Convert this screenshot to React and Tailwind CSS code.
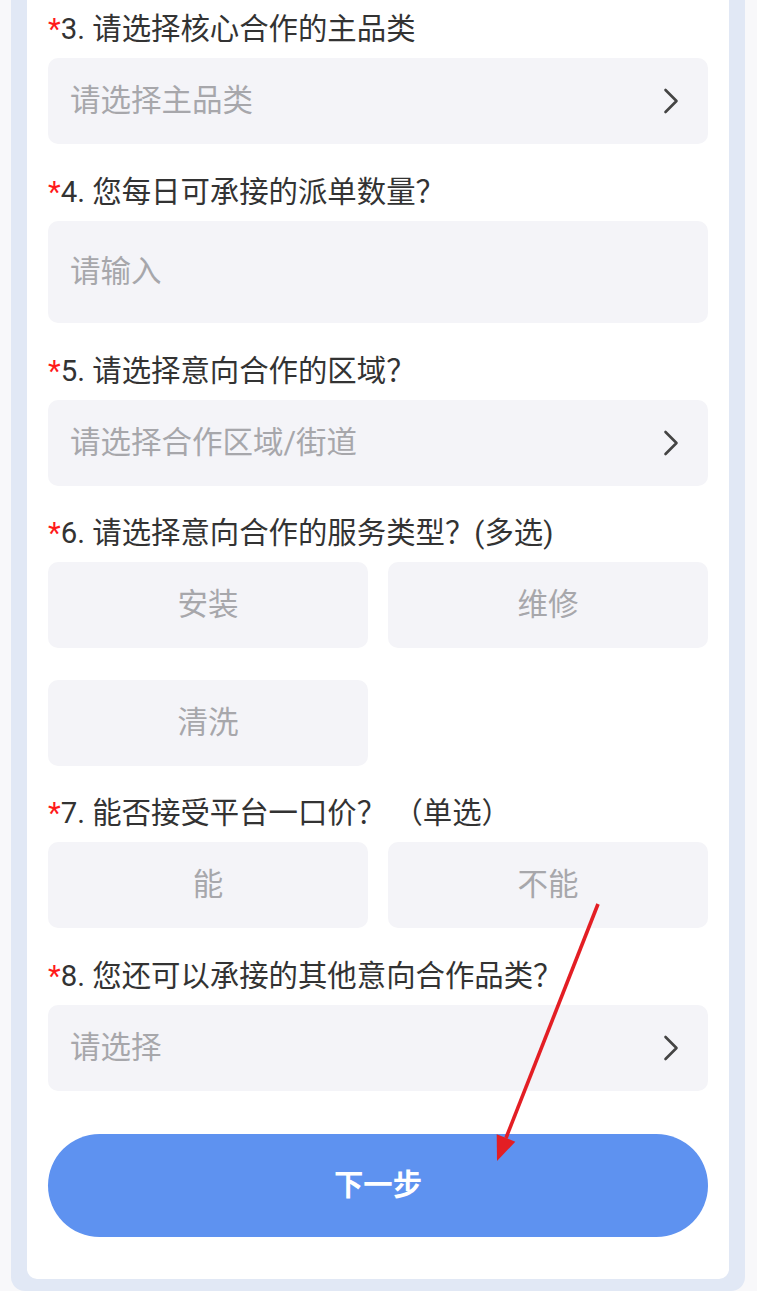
const Label = ({ num, text }) => (
  <div className="h-10 flex items-center text-[29.4px] text-[#333333] leading-none whitespace-nowrap">
    <span className="text-[#ff1a1a]">*</span>
    <span>{num}. {text}</span>
  </div>
);

const Chevron = () => (
  <svg width="16" height="26" viewBox="0 0 16 26" fill="none">
    <path d="M2.5 2 L13.5 13 L2.5 24" stroke="#444444" strokeWidth="2.6" strokeLinecap="round" strokeLinejoin="round" />
  </svg>
);

const SelectBox = ({ placeholder }) => (
  <div className="mt-2 h-[86px] rounded-[10px] bg-[#f4f4f8] pl-[22px] pr-[29px] flex items-center justify-between">
    <span className="text-[30.5px] text-[#a7a7ab]">{placeholder}</span>
    <Chevron />
  </div>
);

const Choice = ({ children }) => (
  <div className="h-[86px] rounded-[10px] bg-[#f4f4f8] flex items-center justify-center text-[30.5px] text-[#a7a7ab]">
    {children}
  </div>
);

const App = () => {
  return (
    <div
      className="relative min-h-screen bg-[#f8f8fa] pl-[11px] pr-[12px]"
      style={{ fontFamily: 'Roboto, "Noto Sans CJK SC", sans-serif' }}
    >
      <div className="bg-[#e1e8f5] px-4 pb-3 rounded-b-[14px]">
        <div className="bg-white rounded-b-[10px] px-[21px] pt-[10px] pb-[42px]">
          <Label num="3" text="请选择核心合作的主品类" />
          <SelectBox placeholder="请选择主品类" />

          <div className="mt-[29px]">
            <Label num="4" text="您每日可承接的派单数量？" />
            <div className="mt-2 h-[102px] rounded-[10px] bg-[#f4f4f8] pl-[22px] flex items-center">
              <span className="text-[30.5px] text-[#a7a7ab]">请输入</span>
            </div>
          </div>

          <div className="mt-[29px]">
            <Label num="5" text="请选择意向合作的区域？" />
            <SelectBox placeholder="请选择合作区域/街道" />
          </div>

          <div className="mt-[28px]">
            <Label num="6" text="请选择意向合作的服务类型？(多选)" />
            <div className="mt-2 grid grid-cols-2 gap-x-5 gap-y-8">
              <Choice>安装</Choice>
              <Choice>维修</Choice>
              <Choice>清洗</Choice>
            </div>
          </div>

          <div className="mt-[28px]">
            <Label num="7" text="能否接受平台一口价？ （单选）" />
            <div className="mt-2 grid grid-cols-2 gap-x-5">
              <Choice>能</Choice>
              <Choice>不能</Choice>
            </div>
          </div>

          <div className="mt-[29px]">
            <Label num="8" text="您还可以承接的其他意向合作品类？" />
            <SelectBox placeholder="请选择" />
          </div>

          <button className="mt-[43px] w-full h-[103px] rounded-full bg-[#5e92f0] text-white text-[29.4px] font-bold flex items-center justify-center">
            下一步
          </button>
        </div>
      </div>

      <svg className="absolute inset-0 pointer-events-none" width="757" height="1291" viewBox="0 0 757 1291">
        <line x1="598" y1="904" x2="506" y2="1138" stroke="#e31e24" strokeWidth="3.6" />
        <polygon points="496.7,1134.3 515.3,1141.7 497,1161" fill="#e31e24" />
      </svg>
    </div>
  );
};

export default App;
